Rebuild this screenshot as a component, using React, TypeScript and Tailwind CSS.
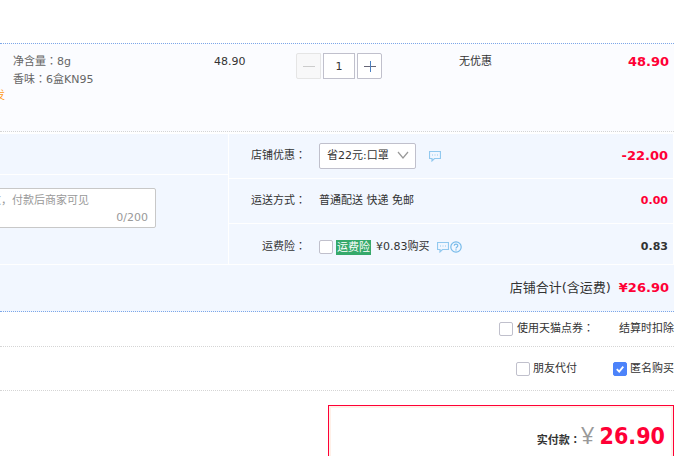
import { useState } from 'react';
import type { ReactNode } from 'react';

function Checkbox({ id, checked, onChange }: { id: string; checked: boolean; onChange: (value: boolean) => void }) {
  return (
    <span className="relative block h-3.5 w-3.5 shrink-0">
      <input
        id={id}
        type="checkbox"
        checked={checked}
        onChange={(e) => onChange(e.target.checked)}
        className="block h-3.5 w-3.5 appearance-none rounded-xs border border-[#c0c0cc] bg-white checked:border-[#4c83fa] checked:bg-[#4c83fa]"
      />
      {checked && (
        <svg viewBox="0 0 14 14" className="pointer-events-none absolute inset-0 h-3.5 w-3.5" fill="none">
          <path d="M3.8 7.2 6.2 9.6 10.3 4.6" stroke="#fff" strokeWidth="1.8" />
        </svg>
      )}
    </span>
  );
}

function ChatIcon() {
  return (
    <svg viewBox="0 0 12 12" className="h-3 w-3 shrink-0" fill="none" stroke="#92c9ef">
      <path d="M.5 1.5h11v7H5.5l-2.5 2.4V8.5H.5z" strokeWidth="1.2" />
      <path d="M3 5h1M5.5 5h1M8 5h1" />
    </svg>
  );
}

function HelpIcon() {
  return (
    <svg viewBox="0 0 12 12" className="h-3 w-3 shrink-0" fill="none" stroke="#78bbea" strokeWidth="1.2">
      <circle cx="6" cy="6" r="5.2" />
      <path d="M4.2 4.8C4.2 2.6 7.8 2.6 7.8 4.7 7.8 6 6 5.8 6 7.4M6 8.3v1.2" />
    </svg>
  );
}

// full-width colon, centred in its cell
function Colon() {
  return <span className="font-['Noto_Sans_CJK_TC',sans-serif] leading-none">：</span>;
}

function FeeRow({ label, amount, children }: { label: string; amount: ReactNode; children: ReactNode }) {
  return (
    <div className="flex flex-1 items-center bg-[#f2f7ff] pr-[5px]">
      <div className="w-[77px] text-right">
        {label}
        <Colon />
      </div>
      <div className="ml-[13px] flex flex-1 items-center">{children}</div>
      {amount}
    </div>
  );
}

export default function App() {
  const [quantity, setQuantity] = useState(1);
  const [message, setMessage] = useState('');
  const [insurance, setInsurance] = useState(false);
  const [points, setPoints] = useState(false);
  const [friendPay, setFriendPay] = useState(false);
  const [anonymous, setAnonymous] = useState(true);

  return (
    <main className="flex h-screen flex-col overflow-hidden bg-white pt-[43px] pr-[10px] font-['DejaVu_Sans','Noto_Sans_CJK_SC',sans-serif] text-[11px] leading-[18px] text-[#333]">
      {/* Item */}
      <section className="flex h-[89px] shrink-0 items-start border-t border-b border-dotted border-t-[#7da7e8] border-b-[#d5d5d5] bg-[#fbfcff] pt-[9px] pr-[5px]">
        <div className="flex w-[13px] justify-end pt-[34px] pr-2 text-[#ff9b1a]">
          <span>发</span>
        </div>
        <div className="w-[201px] text-[#666]">
          <p>净含量<Colon />8g</p>
          <p>香味<Colon />6盒KN95</p>
        </div>
        <div className="w-[82px]">48.90</div>
        <div className="flex w-[163px] gap-[2px]">
          <button
            aria-label="减少"
            disabled={quantity <= 1}
            onClick={() => setQuantity(quantity - 1)}
            className="flex h-[26px] w-[25px] items-center justify-center rounded-l-xs border border-[#c0c0cc] bg-white text-[#445] disabled:border-[#e5e5e5] disabled:bg-[#f8f8f9] disabled:text-[#ccc]"
          >
            <svg viewBox="0 0 12 12" className="h-3 w-3" stroke="currentColor">
              <path d="M0 6.5h12" />
            </svg>
          </button>
          <input
            aria-label="数量"
            value={quantity}
            onChange={(e) => setQuantity(Number(e.target.value) || 1)}
            className="h-[26px] w-8 border border-[#c0c0cc] bg-white text-center"
          />
          <button
            aria-label="增加"
            onClick={() => setQuantity(quantity + 1)}
            className="flex h-[26px] w-[25px] items-center justify-center rounded-r-xs border border-[#c0c0cc] bg-white"
          >
            <svg viewBox="0 0 12 12" className="h-3 w-3">
              <path d="M0 6.5h12" stroke="#667" />
              <path d="M6.5 1v11" stroke="#4a7fc0" />
            </svg>
          </button>
        </div>
        <div className="flex-1">无优惠</div>
        <div className="text-[13px] font-bold text-[#ff0036]">48.90</div>
      </section>

      {/* Message and fees */}
      <section className="mt-[2px] grid h-[130px] shrink-0 grid-cols-[228px_1fr] gap-px pr-px">
        <div className="flex flex-col gap-px">
          <div className="h-10 bg-[#f2f7ff]" />
          <div className="flex-1 bg-[#f2f7ff] pt-[13px]">
            <div className="-ml-5 flex h-10 w-44 flex-col rounded-xs border border-[#c8c8c8] bg-white px-[7px] pt-[3px]">
              <textarea
                aria-label="留言"
                placeholder="致，付款后商家可见"
                maxLength={200}
                rows={1}
                value={message}
                onChange={(e) => setMessage(e.target.value)}
                className="h-[18px] w-full resize-none overflow-hidden pl-[2px] outline-none placeholder:text-[#999]"
              />
              <span className="text-right leading-4 text-[#999]">{message.length}/200</span>
            </div>
          </div>
        </div>
        <div className="grid grid-rows-[44px_44px_40px] gap-px">
          <FeeRow label="店铺优惠" amount={<span className="text-[13px] font-bold text-[#ff0036]">-22.00</span>}>
            <span className="relative block">
              <select
                aria-label="店铺优惠"
                className="block h-[26px] w-[97px] appearance-none rounded-xs border border-[#c0c0cc] bg-white pl-[7px]"
              >
                <option>省22元:口罩</option>
                <option>不使用优惠</option>
              </select>
              <svg viewBox="0 0 12 8" className="pointer-events-none absolute top-2 right-[7px] h-2 w-3" fill="none" stroke="#999">
                <path d="M1 1l5 6 5-6" strokeWidth="1.2" />
              </svg>
            </span>
            <span className="ml-[13px]">
              <ChatIcon />
            </span>
          </FeeRow>
          <FeeRow label="运送方式" amount={<span className="font-bold text-[#ff0036]">0.00</span>}>
            普通配送 快递 免邮
          </FeeRow>
          <div className="flex bg-[#f2f7ff] pt-1.5">
            <FeeRow label="运费险" amount={<span className="font-bold">0.83</span>}>
              <Checkbox id="insurance" checked={insurance} onChange={setInsurance} />
              <label htmlFor="insurance" className="flex items-center">
                <span className="ml-[3px] bg-[#36a96b] px-px leading-[15px] text-white">运费险</span>
                <span className="ml-[5px]">¥0.83购买</span>
              </label>
              <span className="ml-[7px] flex gap-px">
                <ChatIcon />
                <HelpIcon />
              </span>
            </FeeRow>
          </div>
        </div>
      </section>

      <section className="mt-px flex h-[47px] shrink-0 items-center justify-end gap-2 border-b border-dotted border-[#7da7e8] bg-[#f2f7ff] pr-[5px] text-[13px]">
        <span>店铺合计(含运费)</span>
        <span className="font-bold text-[#ff0036]">¥26.90</span>
      </section>

      {/* Payment options */}
      <section className="flex h-[35px] shrink-0 items-center justify-end border-b border-dotted border-[#d5d5d5]">
        <Checkbox id="points" checked={points} onChange={setPoints} />
        <label htmlFor="points" className="ml-1">
          使用天猫点券<Colon />
        </label>
        <span className="ml-[25px]">结算时扣除</span>
      </section>
      <section className="flex h-11 shrink-0 items-center justify-end border-b border-dotted border-[#d5d5d5]">
        <Checkbox id="friend" checked={friendPay} onChange={setFriendPay} />
        <label htmlFor="friend" className="mr-9 ml-[3px]">朋友代付</label>
        <Checkbox id="anonymous" checked={anonymous} onChange={setAnonymous} />
        <label htmlFor="anonymous" className="ml-[3px]">匿名购买</label>
      </section>

      {/* Payable amount */}
      <section className="mt-[14px] ml-auto w-[346px] flex-1 border border-b-0 border-[#ff0036]">
        <div className="flex h-full items-baseline justify-end border-2 border-b-0 border-[#fff0e8] pt-[11px] pr-1.5">
          <span className="font-bold">实付款<Colon /></span>
          <span className="mr-[5px] font-['Open_Sans',sans-serif] text-2xl text-[#999]">¥</span>
          <span className="font-['DejaVu_Sans_Condensed','DejaVu_Sans',sans-serif] text-[23px] leading-8 font-bold text-[#ff0036]">26.90</span>
        </div>
      </section>
    </main>
  );
}
